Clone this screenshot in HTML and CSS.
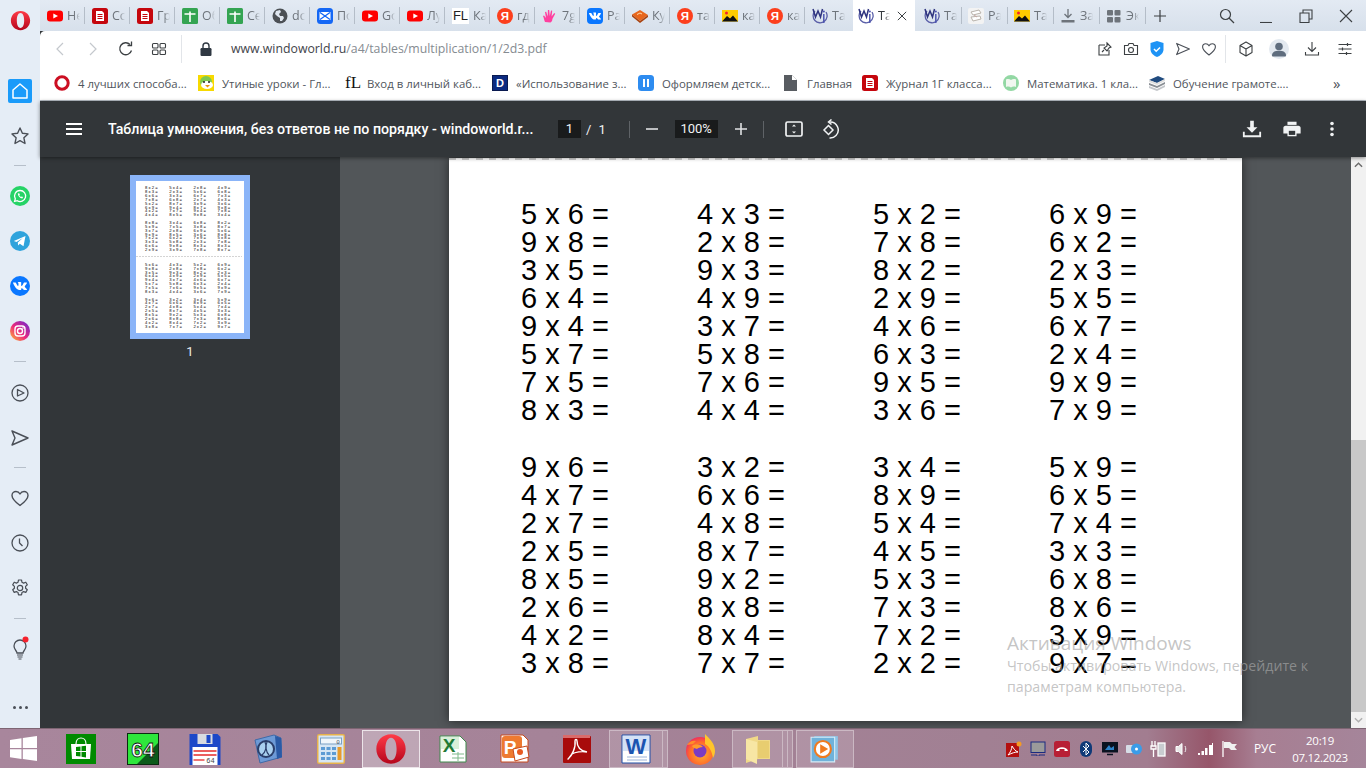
FILE: index.html
```html
<!DOCTYPE html>
<html lang="ru">
<head>
<meta charset="utf-8">
<title>Таблица умножения</title>
<link rel="stylesheet" href="styles.css">
</head>
<body>
<svg class="defs" xmlns="http://www.w3.org/2000/svg">
<defs>
<linearGradient id="opg" x1="0" y1="0" x2="0" y2="1"><stop offset="0" stop-color="#ff3b47"/><stop offset="1" stop-color="#b5051c"/></linearGradient>
<radialGradient id="ffg" cx=".55" cy=".6" r=".6"><stop offset="0" stop-color="#ffb52e"/><stop offset=".7" stop-color="#ff6a2c"/><stop offset="1" stop-color="#f0325b"/></radialGradient>
<linearGradient id="igg" x1="0" y1="1" x2="1" y2="0"><stop offset="0" stop-color="#fdc32e"/><stop offset=".45" stop-color="#ee2a7b"/><stop offset="1" stop-color="#6228d7"/></linearGradient>
<symbol id="yt" viewBox="0 0 16 16"><rect y="2.5" width="16" height="11" rx="3.2" fill="#f00"/><path d="M6.3 5.4 11 8l-4.7 2.6z" fill="#fff"/></symbol>
<symbol id="doc" viewBox="0 0 16 16"><rect width="16" height="16" rx="2.5" fill="#c5060d"/><path d="M4 3h6l2 2v8H4z" fill="#fff"/><path d="M5.5 6.5h5M5.5 8.5h5M5.5 10.5h5" stroke="#c5060d"/></symbol>
<symbol id="sheet" viewBox="0 0 16 16"><rect width="16" height="16" rx="1.5" fill="#34a452"/><path d="M2.5 6h11M8 3.500V14" stroke="#fff" stroke-width="1.600"/></symbol>
<symbol id="globe" viewBox="0 0 16 16"><circle cx="8" cy="8" r="7.5" fill="#4c5055"/><path d="M4 3l4-1 1 2-2 2 1 2 3 0 1 2-2 3-2 0 0-3-3-2-2-2z" fill="#dfe6ef"/></symbol>
<symbol id="mail" viewBox="0 0 16 16"><rect width="16" height="16" rx="3.5" fill="#1467f5"/><rect x="2.5" y="4" width="11" height="8" fill="#fff"/><path d="M3 4.5 8 8l5-3.5M3 11.5 8 8l5 3.5" fill="none" stroke="#1467f5" stroke-width="1.3"/></symbol>
<symbol id="ya" viewBox="0 0 16 16"><circle cx="8" cy="8" r="8" fill="#fc3f1d"/><text x="8" y="12" text-anchor="middle" font-family="Liberation Sans" font-weight="700" font-size="11.5" fill="#fff">Я</text></symbol>
<symbol id="hand" viewBox="0 0 16 16"><path d="M3 14c-1-2-1-4-2-6l1-.5 2 2.500-1-6 1.200-.3 1.500 4.800.2-6.500h1.300l.6 6 1.200-5.500 1.200.3-.6 5.700 2.600-3.500 1 .7-2.800 5.300c0 2-1 3-2 3.500z" fill="#ff3f9f"/></symbol>
<symbol id="vk" viewBox="0 0 16 16"><rect width="16" height="16" rx="4" fill="#0a77ff"/><g transform="translate(2 2) scale(.5)"><path fill="#fff" d="M13.162 18.994c.609 0 .858-.406.851-.915-.031-1.917.714-2.949 2.059-1.604 1.488 1.488 1.796 2.519 3.603 2.519h3.2c.808 0 1.126-.26 1.126-.668 0-.863-1.421-2.386-2.625-3.504-1.686-1.565-1.765-1.602-.313-3.486 1.801-2.339 4.157-5.336 2.073-5.336h-3.981c-.772 0-.828.435-1.103 1.083-.995 2.347-2.886 5.387-3.604 4.922-.751-.485-.407-2.406-.35-5.261.015-.754.011-1.271-1.141-1.539-.629-.145-1.241-.205-1.809-.205-2.273 0-3.841.953-2.95 1.119 1.571.293 1.42 3.692 1.054 5.16-.638 2.556-3.036-2.024-4.035-4.305-.241-.548-.315-.974-1.175-.974h-3.255c-.492 0-.787.16-.787.516 0 .602 2.96 6.72 5.786 9.77 2.756 2.975 5.48 2.708 7.376 2.708z"/></g></symbol>
<symbol id="book" viewBox="0 0 16 16"><path d="M0 6.500 8 2l8 5-8 6z" fill="#e8661c"/><path d="M0 6.500v2L8 15l8-6V7l-8 6z" fill="#a8420f"/><path d="M5 6.500l3-1.500 2 1" stroke="#ffd9a8" fill="none"/></symbol>
<symbol id="img" viewBox="0 0 16 16"><rect y="2" width="16" height="11.500" fill="#ffcc00"/><path d="M0 13.500 5 8l3 2.500L11 7.500l5 6z" fill="#111"/><circle cx="4.500" cy="5" r="1.500" fill="#f2232e"/></symbol>
<symbol id="wi" viewBox="0 0 16 16"><path d="M3 3a7 7 0 1 0 11 1" fill="none" stroke="#5a5fa8" stroke-width="1.300"/><path d="M1 1l2.500 8L6 3l2.500 6L10.500 1" fill="none" stroke="#2f347f" stroke-width="1.500"/><path d="M11.800 6v9" stroke="#4d55b0" stroke-width="1.500"/><circle cx="11.800" cy="3.500" r="1.100" fill="#4d55b0"/></symbol>
<symbol id="paper" viewBox="0 0 16 16"><rect width="16" height="16" rx="2" fill="#f3f3f3"/><path d="M3 4l8-2 2 3-8 2zM3 9l9-1 1 3-8 2z" fill="#fff" stroke="#b9b3ac"/><path d="M6 7l3 2" stroke="#c8a9a4"/></symbol>
<symbol id="dlt" viewBox="0 0 16 16"><path d="M8 1v8M4.500 6 8 9.500 11.500 6" fill="none" stroke="#6e747b" stroke-width="1.300"/><rect x="1.500" y="12" width="13" height="2.500" fill="#6e747b"/></symbol>
<symbol id="grid" viewBox="0 0 16 16"><g fill="#6e747b"><rect x="1" y="2" width="6" height="5.500" rx="1"/><rect x="8.500" y="2" width="6" height="5.500" rx="1"/><rect x="1" y="9" width="6" height="5.500" rx="1"/><rect x="8.500" y="9" width="6" height="5.500" rx="1"/></g></symbol>
<symbol id="send" viewBox="0 0 20 20"><path d="M2 3l16 7-16 7 3-7z" fill="none" stroke="#4a4f57" stroke-width="1.400" stroke-linejoin="round"/></symbol>
<symbol id="heart" viewBox="0 0 20 20"><path d="M10 17.500C4 13 2 10.500 2 7.500 2 5 4 3.500 6 3.500c1.700 0 3.200 1 4 2.500.8-1.500 2.300-2.500 4-2.500 2 0 4 1.500 4 4 0 3-2 5.500-8 10z" fill="none" stroke="#4a4f57" stroke-width="1.400" stroke-linejoin="round"/></symbol>
<symbol id="op" viewBox="0 0 24 24"><path fill="url(#opg)" fill-rule="evenodd" d="M12 1C5.500 1 1 6 1 12s4.500 11 11 11 11-5 11-11S18.500 1 12 1zm0 2.500c2.800 0 4.200 3.800 4.200 8.500s-1.400 8.500-4.200 8.500S7.800 16.700 7.800 12 9.200 3.500 12 3.500z"/></symbol>
</defs>
</svg>

<div class="window">
  <aside class="rail">
    <div class="rail-logo"><svg class="logo"><use href="#op"/></svg></div>
    <div class="rail-item"><span class="home"><svg viewBox="0 0 20 20" class="i20"><path d="M3 9l7-6 7 6v8H3z" fill="none" stroke="#fff" stroke-width="1.500" stroke-linejoin="round"/></svg></span></div>
    <div class="rail-item"><svg viewBox="0 0 20 20" class="i20"><path d="M10 2l2.400 5.200 5.600.7-4.100 3.900 1.100 5.700L10 14.700l-5 2.800 1.100-5.700L2 7.900l5.600-.7z" fill="none" stroke="#4a4f57" stroke-width="1.400" stroke-linejoin="round"/></svg></div>
    <div class="rail-sep rail-sep-a"></div>
    <div class="rail-item"><svg viewBox="0 0 20 20" class="i20"><circle cx="10" cy="10" r="10" fill="#25d366"/><path d="M10 4.500a5.500 5.500 0 0 0-4.700 8.300l-.7 2.600 2.700-.7A5.500 5.500 0 1 0 10 4.500z" fill="none" stroke="#fff" stroke-width="1.300"/><path d="M7.800 7.500c0 2.500 2 4.700 4.500 4.900l.8-1.300-1.500-.7-.6.600c-.8-.3-1.400-1-1.700-1.700l.6-.6-.7-1.500z" fill="#fff"/></svg></div>
    <div class="rail-item"><svg viewBox="0 0 20 20" class="i20"><circle cx="10" cy="10" r="10" fill="#2fa3dc"/><path d="M3.800 10 15.500 5l-2 10.300-3.700-2.600-1.700 1.700-.3-3 5-4.400-6.300 3.900z" fill="#fff"/></svg></div>
    <div class="rail-item"><svg viewBox="0 0 20 20" class="i20"><circle cx="10" cy="10" r="10" fill="#0a77ff"/><g transform="translate(3 3) scale(.583)"><path fill="#fff" d="M13.162 18.994c.609 0 .858-.406.851-.915-.031-1.917.714-2.949 2.059-1.604 1.488 1.488 1.796 2.519 3.603 2.519h3.2c.808 0 1.126-.26 1.126-.668 0-.863-1.421-2.386-2.625-3.504-1.686-1.565-1.765-1.602-.313-3.486 1.801-2.339 4.157-5.336 2.073-5.336h-3.981c-.772 0-.828.435-1.103 1.083-.995 2.347-2.886 5.387-3.604 4.922-.751-.485-.407-2.406-.35-5.261.015-.754.011-1.271-1.141-1.539-.629-.145-1.241-.205-1.809-.205-2.273 0-3.841.953-2.95 1.119 1.571.293 1.42 3.692 1.054 5.16-.638 2.556-3.036-2.024-4.035-4.305-.241-.548-.315-.974-1.175-.974h-3.255c-.492 0-.787.16-.787.516 0 .602 2.96 6.72 5.786 9.77 2.756 2.975 5.48 2.708 7.376 2.708z"/></g></svg></div>
    <div class="rail-item"><svg viewBox="0 0 20 20" class="i20"><circle cx="10" cy="10" r="10" fill="url(#igg)"/><rect x="5" y="5" width="10" height="10" rx="3" fill="none" stroke="#fff" stroke-width="1.400"/><circle cx="10" cy="10" r="2.500" fill="none" stroke="#fff" stroke-width="1.400"/><circle cx="13" cy="7" r=".8" fill="#fff"/></svg></div>
    <div class="rail-sep rail-sep-b"></div>
    <div class="rail-item"><svg viewBox="0 0 20 20" class="i20"><circle cx="10" cy="10" r="8" fill="none" stroke="#4a4f57" stroke-width="1.300"/><path d="M7.500 6.500 14 10l-6.500 3z" fill="none" stroke="#4a4f57" stroke-width="1.300" stroke-linejoin="round"/></svg></div>
    <div class="rail-item"><svg class="i20"><use href="#send"/></svg></div>
    <div class="rail-sep"></div>
    <div class="rail-item"><svg class="i20"><use href="#heart"/></svg></div>
    <div class="rail-item"><svg viewBox="0 0 20 20" class="i20"><circle cx="10" cy="10" r="8" fill="none" stroke="#4a4f57" stroke-width="1.300"/><path d="M9.500 5.500V10l3 3" fill="none" stroke="#4a4f57" stroke-width="1.300"/></svg></div>
    <div class="rail-item"><svg viewBox="0 0 20 20" class="i20"><path d="M8.500 2h3l.5 2.300 1.600.8 2.200-.9 1.500 2.600-1.700 1.600v1.800l1.700 1.600-1.500 2.600-2.200-.8-1.600.9-.5 2.300h-3l-.5-2.300-1.600-.9-2.200.8-1.500-2.600 1.700-1.600V8.400L2.700 6.800l1.500-2.600 2.200.9L8 4.300z" fill="none" stroke="#4a4f57" stroke-width="1.200" stroke-linejoin="round"/><circle cx="10" cy="10" r="2.700" fill="none" stroke="#4a4f57" stroke-width="1.200"/></svg></div>
    <div class="rail-sep rail-sep-b"></div>
    <div class="rail-item rail-bulb">
      <svg viewBox="0 0 20 24" class="bulb"><path d="M7 17c0-2-3-3.500-3-7a6 6 0 0 1 12 0c0 3.500-3 5-3 7z" fill="none" stroke="#4a4f57" stroke-width="1.300"/><path d="M7 19h6M7.500 21h5M8.500 23h3" stroke="#4a4f57" stroke-width="1.200"/><circle cx="15.500" cy="3.500" r="3" fill="#f5222d"/></svg>
    </div>
    <div class="rail-more"><i></i><i></i><i></i></div>
  </aside>

  <main class="main">
    <div class="tabstrip">
      <div class="tab"><svg class="i16"><use href="#yt"/></svg><span class="tl">Не</span></div>
      <div class="tab"><svg class="i16"><use href="#doc"/></svg><span class="tl">Сс</span></div>
      <div class="tab"><svg class="i16"><use href="#doc"/></svg><span class="tl">Гр</span></div>
      <div class="tab"><svg class="i16"><use href="#sheet"/></svg><span class="tl">Об</span></div>
      <div class="tab"><svg class="i16"><use href="#sheet"/></svg><span class="tl">Се</span></div>
      <div class="tab"><svg class="i16"><use href="#globe"/></svg><span class="tl">dc</span></div>
      <div class="tab"><svg class="i16"><use href="#mail"/></svg><span class="tl">По</span></div>
      <div class="tab"><svg class="i16"><use href="#yt"/></svg><span class="tl">Gо</span></div>
      <div class="tab"><svg class="i16"><use href="#yt"/></svg><span class="tl">Лу</span></div>
      <div class="tab"><span class="fl">FL</span><span class="tl">Ка</span></div>
      <div class="tab"><svg class="i16"><use href="#ya"/></svg><span class="tl">гд</span></div>
      <div class="tab"><svg class="i16"><use href="#hand"/></svg><span class="tl">7g</span></div>
      <div class="tab"><svg class="i16"><use href="#vk"/></svg><span class="tl">Ра</span></div>
      <div class="tab"><svg class="i16"><use href="#book"/></svg><span class="tl">Ку</span></div>
      <div class="tab"><svg class="i16"><use href="#ya"/></svg><span class="tl">та</span></div>
      <div class="tab"><svg class="i16"><use href="#img"/></svg><span class="tl">ка</span></div>
      <div class="tab"><svg class="i16"><use href="#ya"/></svg><span class="tl">ка</span></div>
      <div class="tab tab-pre"><svg class="i16"><use href="#wi"/></svg><span class="tl">Та</span></div>
      <div class="tab-active"><svg class="i16"><use href="#wi"/></svg><span class="tl tl-a">Та</span><svg viewBox="0 0 12 12" class="tab-x"><path d="M1 1l10 10M11 1 1 11" stroke="#3c4043" stroke-width="1.200"/></svg></div>
      <div class="tab tab-w"><svg class="i16"><use href="#wi"/></svg><span class="tl">Та</span></div>
      <div class="tab tab-n"><svg class="i16"><use href="#paper"/></svg><span class="tl">Ра</span></div>
      <div class="tab tab-n"><svg class="i16"><use href="#img"/></svg><span class="tl">Та</span></div>
      <div class="tab tab-n"><svg class="i16"><use href="#dlt"/></svg><span class="tl">За</span></div>
      <div class="tab tab-n"><svg class="i16"><use href="#grid"/></svg><span class="tl">Эк</span></div>
      <div class="tab-plus"><svg viewBox="0 0 14 14" class="i14"><path d="M7 1v12M1 7h12" stroke="#3c4043" stroke-width="1.200"/></svg></div>
      <div class="winbtns">
        <div class="winbtn winbtn-s"><svg viewBox="0 0 16 16" class="i16"><circle cx="6.500" cy="6.500" r="5" fill="none" stroke="#3c4043" stroke-width="1.200"/><path d="M10 10l5 5" stroke="#3c4043" stroke-width="1.300"/></svg></div>
        <div class="winbtn"><svg viewBox="0 0 14 14" class="i14"><path d="M1 13.500h12" stroke="#3c4043" stroke-width="1.100"/></svg></div>
        <div class="winbtn"><svg viewBox="0 0 14 14" class="i14"><path d="M1 4h9v9.500H1zM4 4V1h9v9h-3" fill="none" stroke="#3c4043" stroke-width="1.100"/></svg></div>
        <div class="winbtn"><svg viewBox="0 0 14 14" class="i14"><path d="M1 1l12 12M13 1 1 13" stroke="#3c4043" stroke-width="1.100"/></svg></div>
      </div>
    </div>

    <div class="toolbar">
      <div class="nav"><svg viewBox="0 0 16 16" class="i16"><path d="M11 2 5 8l6 6" fill="none" stroke="#c4c8cd" stroke-width="1.200"/></svg></div>
      <div class="nav"><svg viewBox="0 0 16 16" class="i16"><path d="M5 2l6 6-6 6" fill="none" stroke="#c4c8cd" stroke-width="1.200"/></svg></div>
      <div class="nav"><svg viewBox="0 0 16 16" class="i16"><path d="M13.500 9.500A6 6 0 1 1 12 3.500" fill="none" stroke="#3c4043" stroke-width="1.300"/><path d="M9.500 4.500h4v-4" fill="none" stroke="#3c4043" stroke-width="1.300"/></svg></div>
      <div class="nav"><svg viewBox="0 0 16 16" class="i16"><g fill="none" stroke="#3c4043" stroke-width="1.100"><rect x="1.500" y="2.500" width="5.500" height="4.500" rx="1"/><rect x="9" y="2.500" width="5.500" height="4.500" rx="1"/><rect x="1.500" y="9" width="5.500" height="4.500" rx="1"/><rect x="9" y="9" width="5.500" height="4.500" rx="1"/></g></svg></div>
      <div class="vsep"></div>
      <svg viewBox="0 0 16 16" class="i16 lock"><rect x="2.500" y="7" width="11" height="8" rx="1.200" fill="#2f3842"/><path d="M5 7V5a3 3 0 0 1 6 0v2" fill="none" stroke="#2f3842" stroke-width="1.400"/></svg>
      <div class="url"><b>www.windoworld.ru</b>/a4/tables/multiplication/1/2d3.pdf</div>
      <div class="tools">
        <div class="tool"><svg viewBox="0 0 16 16" class="i16"><path d="M2 4h6M2 4v10h10V9" fill="none" stroke="#3c4043" stroke-width="1.100"/><path d="M10 2l4 4-2 1-2 3-3-3 3-2zM7 9l-2 2" fill="none" stroke="#3c4043" stroke-width="1.100"/></svg></div>
        <div class="tool"><svg viewBox="0 0 16 16" class="i16"><path d="M1.500 4.500h3.500l1-2h4l1 2h3.500v9h-13z" fill="none" stroke="#3c4043" stroke-width="1.100"/><circle cx="8" cy="9" r="2.500" fill="none" stroke="#3c4043" stroke-width="1.100"/></svg></div>
        <div class="tool"><svg viewBox="0 0 16 16" class="i16"><path d="M8 0l6.500 2v6.500C14.500 12 11 15 8 16c-3-1-6.500-4-6.500-7.500V2z" fill="#1e93f5"/><path d="M5 8l2.200 2.200L11 6.500" fill="none" stroke="#fff" stroke-width="1.500"/></svg></div>
        <div class="tool"><svg class="i16"><use href="#send"/></svg></div>
        <div class="tool"><svg class="i16"><use href="#heart"/></svg></div>
      </div>
      <div class="vsep vsep-r"></div>
      <div class="nav"><svg viewBox="0 0 16 16" class="i16"><path d="M8 1l6 3.500v7L8 15l-6-3.500v-7zM2 4.500 8 8l6-3.500M8 8v7" fill="none" stroke="#3c4043" stroke-width="1.100" stroke-linejoin="round"/></svg></div>
      <div class="nav"><span class="avatar"><svg viewBox="0 0 20 20" class="i20"><circle cx="10" cy="7.500" r="3.800" fill="#5f6d7e"/><path d="M3 16.500C3 13 6 11.800 10 11.800s7 1.200 7 4.700c0 .8-.5 1-1 1H4c-.5 0-1-.2-1-1z" fill="#5f6d7e"/></svg></span></div>
      <div class="nav"><svg viewBox="0 0 16 16" class="i16"><path d="M8 1v9M4 6.500 8 10.500l4-4M1.500 11v3h13v-3" fill="none" stroke="#3c4043" stroke-width="1.100"/></svg></div>
      <div class="nav"><svg viewBox="0 0 16 16" class="i16"><path d="M1.500 3.500h13M1.500 8h13M1.500 12.500h13" stroke="#3c4043" stroke-width="1.100"/><path d="M10.500 2v3M5.500 6.500v3M9.500 11v3" stroke="#3c4043" stroke-width="1.200"/></svg></div>
    </div>

    <div class="bookmarks">
      <div class="bm bm-f"><svg viewBox="0 0 16 16" class="i16"><circle cx="8" cy="8" r="6.200" fill="none" stroke="#cc0f22" stroke-width="3"/></svg><span>4 лучших способа...</span></div>
      <div class="bm bm-w"><svg viewBox="0 0 16 16" class="i16"><rect width="16" height="16" fill="#f7d900"/><circle cx="8" cy="7" r="6" fill="#7ec850"/><ellipse cx="9" cy="10" rx="6" ry="4" fill="#fff"/><circle cx="6" cy="7" r="1" fill="#222"/><circle cx="11" cy="7" r="1" fill="#222"/><path d="M7 10h5l-2.500 2.500z" fill="#e69512"/></svg><span>Утиные уроки - Гл...</span></div>
      <div class="bm bm-w"><span class="fls">fL</span><span>Вход в личный каб...</span></div>
      <div class="bm"><span class="dbox">D</span><span>«Использование з...</span></div>
      <div class="bm"><svg viewBox="0 0 16 16" class="i16"><rect width="16" height="16" rx="3.500" fill="#2e8cf0"/><path d="M5 4h2v8H5zM9 4h2v8H9z" fill="#fff"/></svg><span>Оформляем детск...</span></div>
      <div class="bm bm-s"><svg viewBox="0 0 13 16" class="bm-page"><path d="M0 0h8l5 5v11H0z" fill="#585c61"/><path d="M8 0v5h5" fill="#fff"/></svg><span>Главная</span></div>
      <div class="bm bm-n"><svg class="i16"><use href="#doc"/></svg><span>Журнал 1Г класса...</span></div>
      <div class="bm"><svg viewBox="0 0 16 16" class="i16"><circle cx="8" cy="8" r="8" fill="#93d8a4"/><path d="M3 4.500c2-.8 3.500-.5 5 .5 1.500-1 3-1.300 5-.5V12c-2-.7-3.500-.5-5 .5-1.500-1-3-1.200-5-.5z" fill="#f1f7f0"/></svg><span>Математика. 1 кла...</span></div>
      <div class="bm bm-l"><svg viewBox="0 0 16 16" class="i16"><path d="M0 5 9 1l7 3-8 4z" fill="#204b7f"/><path d="M0 5v2l8 3 8-4V4L8 8z" fill="#dedede"/><path d="M0 8v2l8 3 8-4V7l-8 4z" fill="#8a8f95"/><path d="M0 11v2l8 3 8-4v-2l-8 4z" fill="#c3c6ca"/></svg><span>Обучение грамоте....</span></div>
      <div class="bm-more">»</div>
    </div>

    <section class="viewer">
      <header class="pdfbar">
        <div class="pdf-menu"><svg viewBox="0 0 16 12" class="burger"><path d="M0 1h16M0 6h16M0 11h16" stroke="#fff" stroke-width="1.800"/></svg></div>
        <div class="pdf-title">Таблица умножения, без ответов не по порядку - windoworld.r...</div>
        <div class="pdf-input pdf-page">1</div>
        <span class="pdf-slash">/</span>
        <span class="pdf-total">1</span>
        <div class="pdf-sep pdf-sep-a"></div>
        <svg viewBox="0 0 14 14" class="i14 pdf-minus"><path d="M1 7h12" stroke="#dfe1e3" stroke-width="1.600"/></svg>
        <div class="pdf-input pdf-zoom">100%</div>
        <svg viewBox="0 0 14 14" class="i14 pdf-plus"><path d="M1 7h12M7 1v12" stroke="#dfe1e3" stroke-width="1.600"/></svg>
        <div class="pdf-sep pdf-sep-b"></div>
        <svg viewBox="0 0 20 20" class="i20 pdf-fit"><rect x="2" y="3" width="16" height="14" rx="1.500" fill="none" stroke="#f1f3f4" stroke-width="1.700"/><path d="M10 5.500l-2 2h4zM10 14.500l-2-2h4z" fill="#f1f3f4"/></svg>
        <svg viewBox="0 0 20 20" class="i20 pdf-rot"><path d="M8.500 6.500 4 11l4.500 4.500L13 11z" fill="none" stroke="#f1f3f4" stroke-width="1.500"/><path d="M9 3h1a8 8 0 0 1 6 13.500A8 8 0 0 1 9.500 19" fill="none" stroke="#f1f3f4" stroke-width="1.500"/><path d="M11.500.5 8.500 3l3 2.500" fill="none" stroke="#f1f3f4" stroke-width="1.500"/></svg>
        <div class="pdf-right">
          <div class="pdf-btn"><svg viewBox="0 0 22 22" class="i20"><path d="M9 2h4v7h4l-6 6-6-6h4z" fill="#f1f3f4"/><path d="M2 14v5h18v-5" fill="none" stroke="#f1f3f4" stroke-width="2"/></svg></div>
          <div class="pdf-btn"><svg viewBox="0 0 22 22" class="i20"><path d="M6 3h10v3.500H6z" fill="#f1f3f4"/><path d="M4 7.500h14c1.500 0 2.500 1 2.500 2.500v6H16v3H6v-3H1.500v-6c0-1.500 1-2.500 2.500-2.500z" fill="#f1f3f4"/><rect x="7.500" y="13" width="7" height="4.500" fill="#323639"/></svg></div>
          <div class="pdf-btn"><svg viewBox="0 0 20 20" class="i20"><circle cx="10" cy="4.500" r="1.800" fill="#f1f3f4"/><circle cx="10" cy="10" r="1.800" fill="#f1f3f4"/><circle cx="10" cy="15.500" r="1.800" fill="#f1f3f4"/></svg></div>
        </div>
      </header>
      <div class="pdf-body">
        <aside class="thumbs">
          <div class="thumb">
            <div class="mini">
              <div class="mini-group">
<div class="mini-col">8 x 2 =
8 x 3 =
6 x 6 =
7 x 8 =
5 x 2 =
6 x 9 =
4 x 2 =
4 x 4 =</div>
<div class="mini-col">5 x 4 =
2 x 3 =
3 x 3 =
6 x 8 =
8 x 7 =
9 x 4 =
7 x 7 =
8 x 5 =</div>
<div class="mini-col">2 x 8 =
5 x 6 =
6 x 7 =
2 x 7 =
3 x 9 =
8 x 7 =
9 x 4 =
9 x 8 =</div>
<div class="mini-col">4 x 9 =
6 x 8 =
7 x 3 =
4 x 3 =
3 x 6 =
9 x 8 =
7 x 8 =
3 x 4 =</div>
              </div>
              <div class="mini-group">
<div class="mini-col">8 x 8 =
5 x 9 =
3 x 7 =
9 x 9 =
7 x 2 =
3 x 3 =
6 x 6 =
2 x 9 =</div>
<div class="mini-col">3 x 4 =
7 x 5 =
2 x 8 =
8 x 5 =
6 x 2 =
5 x 8 =
9 x 8 =
3 x 9 =</div>
<div class="mini-col">6 x 8 =
3 x 8 =
6 x 9 =
3 x 6 =
7 x 9 =
2 x 3 =
8 x 3 =
7 x 8 =</div>
<div class="mini-col">8 x 2 =
8 x 7 =
5 x 6 =
8 x 8 =
5 x 8 =
7 x 8 =
8 x 3 =
8 x 7 =</div>
              </div>
              <div class="mini-rule"></div>
              <div class="mini-group">
<div class="mini-col">5 x 6 =
9 x 8 =
3 x 5 =
6 x 4 =
9 x 4 =
5 x 7 =
7 x 5 =
8 x 3 =</div>
<div class="mini-col">4 x 3 =
2 x 8 =
9 x 3 =
4 x 9 =
3 x 7 =
5 x 8 =
7 x 6 =
4 x 4 =</div>
<div class="mini-col">5 x 2 =
7 x 8 =
8 x 2 =
2 x 9 =
4 x 6 =
6 x 3 =
9 x 5 =
3 x 6 =</div>
<div class="mini-col">6 x 9 =
6 x 2 =
2 x 3 =
5 x 5 =
6 x 7 =
2 x 4 =
9 x 9 =
7 x 9 =</div>
              </div>
              <div class="mini-group">
<div class="mini-col">9 x 6 =
4 x 7 =
2 x 7 =
2 x 5 =
8 x 5 =
2 x 6 =
4 x 2 =
3 x 8 =</div>
<div class="mini-col">3 x 2 =
6 x 6 =
4 x 8 =
8 x 7 =
9 x 2 =
8 x 8 =
8 x 4 =
7 x 7 =</div>
<div class="mini-col">3 x 4 =
8 x 9 =
5 x 4 =
4 x 5 =
5 x 3 =
7 x 3 =
7 x 2 =
2 x 2 =</div>
<div class="mini-col">5 x 9 =
6 x 5 =
7 x 4 =
3 x 3 =
6 x 8 =
8 x 6 =
3 x 9 =
9 x 7 =</div>
              </div>
            </div>
          </div>
          <div class="thumb-num">1</div>
        </aside>
        <div class="stage">
          <article class="page">
            <div class="page-rule"></div>
            <div class="eq-group">
<div class="eq-col">5 x 6 =
9 x 8 =
3 x 5 =
6 x 4 =
9 x 4 =
5 x 7 =
7 x 5 =
8 x 3 =</div>
<div class="eq-col">4 x 3 =
2 x 8 =
9 x 3 =
4 x 9 =
3 x 7 =
5 x 8 =
7 x 6 =
4 x 4 =</div>
<div class="eq-col">5 x 2 =
7 x 8 =
8 x 2 =
2 x 9 =
4 x 6 =
6 x 3 =
9 x 5 =
3 x 6 =</div>
<div class="eq-col">6 x 9 =
6 x 2 =
2 x 3 =
5 x 5 =
6 x 7 =
2 x 4 =
9 x 9 =
7 x 9 =</div>
            </div>
            <div class="eq-group">
<div class="eq-col">9 x 6 =
4 x 7 =
2 x 7 =
2 x 5 =
8 x 5 =
2 x 6 =
4 x 2 =
3 x 8 =</div>
<div class="eq-col">3 x 2 =
6 x 6 =
4 x 8 =
8 x 7 =
9 x 2 =
8 x 8 =
8 x 4 =
7 x 7 =</div>
<div class="eq-col">3 x 4 =
8 x 9 =
5 x 4 =
4 x 5 =
5 x 3 =
7 x 3 =
7 x 2 =
2 x 2 =</div>
<div class="eq-col">5 x 9 =
6 x 5 =
7 x 4 =
3 x 3 =
6 x 8 =
8 x 6 =
3 x 9 =
9 x 7 =</div>
            </div>
          </article>
        </div>
        <div class="scroll">
          <div class="sc-arrow"><svg viewBox="0 0 10 6" class="sc-i"><path d="M1 5l4-4 4 4" fill="none" stroke="#6b6b6b" stroke-width="1.600"/></svg></div>
          <div class="sc-track"><div class="sc-thumb"></div></div>
          <div class="sc-arrow"><svg viewBox="0 0 10 6" class="sc-i"><path d="M1 1l4 4 4-4" fill="none" stroke="#b0b0b0" stroke-width="1.600"/></svg></div>
        </div>
      </div>
    </section>
  </main>
</div>

<footer class="taskbar">
  <div class="start"><svg viewBox="0 0 27 25" class="winlogo"><path d="M0 4l11.500-1.700V12H0zM12.800 2.100 27 0v12H12.800zM0 13.200h11.500V23L0 21.300zM12.800 13.200H27V25l-14.200-2z" fill="#fff"/></svg></div>
  <div class="tb"><svg viewBox="0 0 30 30" class="i30"><rect width="30" height="30" fill="#008a00"/><path d="M5 10h20l-1 15H6z" fill="#fff"/><path d="M10 10c0-8 10-8 10 0" fill="none" stroke="#fff" stroke-width="1.200"/><path d="M10 13l4.500-.6v4.600H10zM15.500 12.300l4.500-.6V17h-4.500zM10 18h4.500v4.600L10 22zM15.500 18H20v5.400l-4.500-.6z" fill="#008a00"/></svg></div>
  <div class="tb"><svg viewBox="0 0 32 32" class="i32"><rect x=".5" y=".5" width="31" height="31" fill="#2ee63c" stroke="#0b2a10"/><path d="M31 10v21H10z" fill="#0c5a1a"/><text x="16" y="24" text-anchor="middle" font-family="Liberation Sans" font-weight="700" font-size="21" fill="#fff" stroke="#111" stroke-width=".8">64</text></svg></div>
  <div class="tb"><svg viewBox="0 0 31 32" class="i32"><path d="M0 1h28l3 3v28H0z" fill="#1c48c8"/><rect x="8" y="1" width="15" height="10" fill="#d8dbe0"/><rect x="17" y="2" width="4" height="8" fill="#1c48c8"/><rect x="3" y="14" width="25" height="18" fill="#fff"/><path d="M4 18h23M4 22h23" stroke="#e52b2b" stroke-width="1.300"/><path d="M4 27h11" stroke="#e52b2b" stroke-width="1.300"/><text x="21" y="30" text-anchor="middle" font-family="Liberation Mono" font-size="7" fill="#444">64</text></svg></div>
  <div class="tb"><svg viewBox="0 0 30 30" class="i30"><path d="M3 6 22 1l7 3 1 19-22 6z" fill="#6d9ad6" stroke="#3f6aa8"/><path d="M23 2l6 2 1 19-5 2z" fill="#2a5aa6"/><circle cx="14" cy="15" r="9" fill="#2a3e6a"/><circle cx="14" cy="15" r="7" fill="#a9d0ef"/><path d="M10 21c4-3 5-9 3-13M17 21c-3-3-4-9-2-13" fill="none" stroke="#2a3e6a" stroke-width="1.200"/></svg></div>
  <div class="tb tb-calc"><svg viewBox="0 0 28 30" class="i30"><rect width="28" height="30" rx="2" fill="#e8b24a"/><rect x="1.500" y="1.500" width="25" height="27" fill="#d6e6f4"/><rect x="3.500" y="4" width="21" height="6" fill="#f0f6fb" stroke="#7aa0c4"/><text x="21" y="9.500" text-anchor="middle" font-family="Liberation Mono" font-size="6" fill="#456">0</text><g fill="#5d9bd4"><rect x="4" y="13" width="4" height="3"/><rect x="9.500" y="13" width="4" height="3"/><rect x="15" y="13" width="4" height="3"/><rect x="4" y="18" width="4" height="3"/><rect x="9.500" y="18" width="4" height="3"/><rect x="15" y="18" width="4" height="3"/><rect x="4" y="23" width="4" height="3"/><rect x="9.500" y="23" width="4" height="3"/><rect x="15" y="23" width="4" height="3"/></g><rect x="20.500" y="13" width="4" height="13" fill="#e89b2c"/></svg></div>
  <div class="run run-opera"><svg class="i32"><use href="#op"/></svg></div>
  <div class="tb tb-x"><svg viewBox="0 0 30 30" class="i30"><path d="M2 2h20l6 6v20H2z" fill="#fff" stroke="#3f8a4c"/><path d="M3 3h18v12H3z" fill="#d9efd9"/><text x="11" y="18" text-anchor="middle" font-family="Liberation Sans" font-weight="700" font-size="19" fill="#1f7a36">X</text><path d="M14 20h12M14 24h12M20 18v9" stroke="#7fb98a"/></svg></div>
  <div class="tb"><svg viewBox="0 0 30 30" class="i30"><path d="M1 1h22l5 5v22H1z" fill="#fff" stroke="#c8481c"/><rect x="2" y="2" width="20" height="22" rx="3" fill="#ee7a30"/><text x="10" y="20" text-anchor="middle" font-family="Liberation Sans" font-weight="700" font-size="19" fill="#fff">P</text><path d="M13 15l14-3 2 11-14 4z" fill="#fff" stroke="#c8481c"/><circle cx="20" cy="18" r="3" fill="#e85a20"/></svg></div>
  <div class="tb"><svg viewBox="0 0 30 30" class="i30"><rect x="1" y="2" width="28" height="27" rx="1" fill="#a80b0b"/><rect x="1" y="1" width="27" height="3" fill="#d96b6b"/><path d="M6 25c4-3 8-12 7-18 0-2 2-2 2 0 0 6 4 10 10 11-5-1-12 0-15 2-2 2-4 6-4 5z" fill="none" stroke="#fff" stroke-width="1.400"/></svg></div>
  <div class="run run-word"><svg viewBox="0 0 30 30" class="i30"><path d="M1 1h28v28H1z" fill="#fff" stroke="#1f4fa8"/><path d="M2 2h26v15H2z" fill="#d4e2f6"/><text x="15" y="20" text-anchor="middle" font-family="Liberation Sans" font-weight="700" font-size="22" fill="#1c54b0">W</text><path d="M6 23h20M6 26h20" stroke="#9db4d8"/></svg></div>
  <div class="run-stack"></div>
  <div class="tb tb-ff"><svg viewBox="0 0 32 32" class="i32"><circle cx="16" cy="18" r="14" fill="url(#ffg)"/><path d="M21 1c5 5 10 10 10 17 0 3-1 5-2 7-1-6-3-11-8-14z" fill="#ffc52c"/><path d="M3 12c2-3 5-5 9-4l-3 3z" fill="#ff8f2a"/><circle cx="16" cy="18" r="6.500" fill="#7b3cc4"/><path d="M8 13c3-2 8-2 11 1-3 0-5 1-6 2-2-1-4-1-5-3z" fill="#ff9b2d"/></svg></div>
  <div class="run run-folder"><svg viewBox="0 0 32 32" class="i32"><path d="M4 6l12-3v4h12v19H16L4 30z" fill="#f0d988"/><path d="M4 6l11 3v22L4 26z" fill="#f7e6a4"/><path d="M16 8h11v17H16z" fill="#e8cd70"/></svg></div>
  <div class="run-stack"></div>
  <div class="run-stack run-stack-b"></div>
  <div class="run run-wmp"><svg viewBox="0 0 28 28" class="i30"><path d="M4 2h22v22H4z" fill="#8ec6e8"/><path d="M1 3h22v23H1z" fill="#6fb2da" stroke="#d5ecf8"/><circle cx="12" cy="14" r="8.500" fill="#f07b1f"/><circle cx="12" cy="14" r="6.500" fill="#fff"/><path d="M9.500 9.500l7.500 4.500-7.500 4.500z" fill="#f07b1f"/></svg></div>
  <div class="tray">
    <div class="tr"><svg viewBox="0 0 16 16" class="i16"><rect y="2" width="13" height="14" fill="#b40f0f"/><path d="M2 14c2-2 4-6 4-9 2 3 3 5 6 6-3 0-6 1-10 3z" fill="none" stroke="#fff"/><circle cx="13" cy="3" r="2.500" fill="#f59a23"/></svg></div>
    <div class="tr"><svg viewBox="0 0 16 16" class="i16"><rect x="1" y="1" width="14" height="10.500" fill="#9a9a9a" stroke="#1a2a80"/><path d="M1 14h6v1M9 15v-1h6" fill="none" stroke="#1a2a80"/></svg></div>
    <div class="tr"><svg viewBox="0 0 16 16" class="i16"><rect width="16" height="16" rx="2.500" fill="#b81f35"/><path d="M2 10c1-5 11-5 12 0h-3.500V8h-5v2z" fill="#fff"/></svg></div>
    <div class="tr"><svg viewBox="0 0 14 16" class="i16"><rect x="1" width="12" height="16" rx="6" fill="#0f3a78"/><path d="M4 5l6 6-3 3V2l3 3-6 6" fill="none" stroke="#fff"/></svg></div>
    <div class="tr"><svg viewBox="0 0 16 16" class="i16"><rect y="1" width="16" height="10.500" fill="#0a1220"/><path d="M3 9l4-5 2 3 3-2v4z" fill="#2d82c8"/><path d="M5 13.500h6" stroke="#0a1220" stroke-width="1.500"/></svg></div>
    <div class="tr"><svg viewBox="0 0 16 16" class="i16"><rect y="4" width="11" height="8" rx="1" fill="#d6dde6"/><circle cx="10.500" cy="8" r="5.500" fill="#3a9ce8"/><circle cx="10.500" cy="8" r="1.500" fill="#fff"/></svg></div>
    <div class="tr"><svg viewBox="0 0 16 16" class="i16"><path d="M2 0v5M5 0v5M1 5h5v3H1zM3.500 8v8" stroke="#fff" fill="none" stroke-width="1.300"/><rect x="8" y="2" width="7" height="13" fill="#c8ccd0" stroke="#fff" stroke-width="1.300"/></svg></div>
    <div class="tr"><svg viewBox="0 0 14 16" class="i16"><path d="M1 5.500h2.500L7 2.500v11l-3.500-3H1z" fill="#e8e8e8" stroke="#fff"/><path d="M10 5c1 2 1 4 0 6" fill="none" stroke="#eee"/></svg></div>
    <div class="tr"><svg viewBox="0 0 16 16" class="i16"><path d="M0 14h2v-2H0zM3.500 14h2.500v-4H3.500zM7 14h2.500V7H7zM11 14h4V2h-1v12h-3z" fill="#fff"/><path d="M11 14h4V4h-4z" fill="#fff"/></svg></div>
    <div class="tr"><svg viewBox="0 0 16 16" class="i16"><path d="M1 0v16" stroke="#fff" stroke-width="1.300"/><path d="M2 1h6l2 2h5l-2.500 3 2.500 3H9L7 7H2z" fill="#f0f0f0"/></svg></div>
  </div>
  <div class="lang">РУС</div>
  <div class="clock"><div>20:19</div><div>07.12.2023</div></div>
</footer>

<div class="activate">
  <div class="a-h">Активация Windows</div>
  <div class="a-t">Чтобы активировать Windows, перейдите к</div>
  <div class="a-t">параметрам компьютера.</div>
</div>
</body>
</html>
```
FILE: styles.css
```css
* { box-sizing: border-box; }
html, body { margin: 0; padding: 0; }
body { width: 1366px; height: 768px; overflow: hidden; font-family: "Open Sans", "Noto Sans", sans-serif; background: #323639; }
svg { display: block; flex: none; }
.defs { width: 0; height: 0; }
.i14 { width: 14px; height: 14px; }
.i16 { width: 16px; height: 16px; }
.i20 { width: 20px; height: 20px; }
.i30 { width: 30px; height: 30px; }
.i32 { width: 32px; height: 32px; }

.window { display: flex; height: 728px; }

/* left rail */
.rail { width: 40px; flex: none; display: flex; flex-direction: column; align-items: center; background: #e5edf6; }
.rail-logo { height: 68px; width: 100%; display: flex; justify-content: center; padding-top: 10px; }
.logo { width: 21px; height: 21px; }
.rail-item { height: 45px; width: 100%; display: flex; align-items: center; justify-content: center; }
.home { width: 24px; height: 24px; background: #1a9bfa; border-radius: 2px; display: flex; align-items: center; justify-content: center; }
.rail-sep { height: 15px; width: 100%; display: flex; align-items: center; justify-content: center; }
.rail-sep::before { content: ""; width: 12px; height: 1px; background: #b6bfca; }
.rail-sep-a { height: 15px; }
.rail-sep-b { height: 17px; }
.rail-bulb { height: 42px; }
.bulb { width: 20px; height: 24px; }
.rail-more { margin-top: auto; padding-bottom: 19px; display: flex; gap: 3px; }
.rail-more i { width: 3px; height: 3px; border-radius: 50%; background: #4a4f57; display: block; }

.main { flex: 1; min-width: 0; display: flex; flex-direction: column; }

/* tabs */
.tabstrip { height: 31px; display: flex; align-items: stretch; background: linear-gradient(#e3eaf3, #d7e0eb); }
.tab { width: 45px; flex: none; display: flex; align-items: center; gap: 4px; padding-left: 7px; overflow: hidden; background: linear-gradient(#b4bdc8, #b4bdc8) right center / 1px 17px no-repeat; }
.tab-pre { width: 48px; background: none; }
.tab-w { width: 47px; padding-left: 9px; }
.tab-n { width: 46px; padding-left: 6px; }
.tl { width: 13px; flex: none; overflow: hidden; white-space: nowrap; font-size: 12.5px; color: #6e747b; -webkit-mask-image: linear-gradient(to right, #000 55%, transparent); mask-image: linear-gradient(to right, #000 55%, transparent); }
.tl-a { color: #33383d; width: 12px; }
.fl { width: 17px; height: 16px; background: #fff; color: #222; font: 13px "Liberation Sans", sans-serif; line-height: 16px; text-align: center; flex: none; }
.tab-active { width: 62px; flex: none; display: flex; align-items: center; padding-left: 5px; gap: 4px; background: #fff; }
.tab-x { width: 10px; height: 10px; margin-left: 3px; }
.tab-plus { width: 28px; display: flex; align-items: center; justify-content: center; margin-left: 0; }
.winbtns { margin-left: auto; display: flex; }
.winbtn { width: 40px; display: flex; align-items: center; justify-content: center; }
.winbtn-s { width: 38px; }

/* toolbar */
.toolbar { height: 35px; background: #fff; display: flex; align-items: center; padding: 0 4.5px 0 3.5px; border-top-left-radius: 5px; margin-top: 0; }
.nav { width: 33px; height: 100%; display: flex; align-items: center; justify-content: center; }
.vsep { width: 1px; height: 28px; background: #e2e5e9; margin-left: 5.5px; }
.vsep-r { margin-left: 3px; margin-right: 4px; }
.lock { margin-left: 16px; }
.url { margin-left: 17px; font-size: 12.3px; color: #858b91; white-space: nowrap; }
.url b { font-weight: 400; color: #3f444a; }
.tools { margin-left: auto; display: flex; }
.tool { width: 26px; display: flex; justify-content: center; }
.avatar { width: 20px; height: 20px; border-radius: 50%; background: #e3e9f0; display: block; }

/* bookmarks */
.bookmarks { height: 35px; background: #fff; border-bottom: 1px solid #b9c0c8; display: flex; align-items: center; padding-left: 14px; }
.bm { width: 146px; flex: none; display: flex; align-items: center; gap: 8px; font-size: 11.4px; color: #50555c; white-space: nowrap; overflow: hidden; }
.bm-f { width: 144px; }
.bm-w { width: 147px; }
.bm-s { width: 78px; gap: 10px; }
.bm-n { width: 141px; }
.bm-l { width: 184px; }
.bm-page { width: 13px; height: 16px; }
.fls { width: 14px; font: 17px "Liberation Serif", serif; color: #111; flex: none; }
.dbox { width: 16px; height: 16px; background: #0b2a80; border: 1px solid #0a1a50; color: #fff; font: 700 11px/14px "Liberation Sans", sans-serif; text-align: center; flex: none; }
.bm-more { font-size: 15px; color: #4a4f57; }

/* pdf viewer */
.viewer { flex: 1; min-height: 0; display: flex; flex-direction: column; background: #525659; }
.pdfbar { height: 56px; flex: none; display: flex; align-items: center; background: #323639; padding-left: 14px; padding-right: 14px; color: #f1f3f4; position: relative; z-index: 2; box-shadow: 0 1px 4px rgba(0,0,0,.45); }
.pdf-menu { width: 40px; display: flex; justify-content: center; }
.burger { width: 16px; height: 12px; }
.pdf-title { width: 425px; margin-left: 14px; font: 500 14.2px "Roboto", sans-serif; white-space: nowrap; overflow: hidden; color: #fff; }
.pdf-input { background: #191b1c; height: 18px; font: 400 13px/18px "Roboto", sans-serif; text-align: center; color: #f1f3f4; }
.pdf-page { width: 23px; margin-left: 25px; }
.pdf-slash { margin-left: 5px; font: 13px "Roboto", sans-serif; }
.pdf-total { margin-left: 7px; font: 13px "Roboto", sans-serif; }
.pdf-sep { width: 1px; height: 17px; background: #5f6367; }
.pdf-sep-a { margin-left: 23px; }
.pdf-minus { margin-left: 15px; }
.pdf-zoom { width: 43px; margin-left: 16px; }
.pdf-plus { margin-left: 16px; }
.pdf-sep-b { margin-left: 15px; }
.pdf-fit { margin-left: 20px; }
.pdf-rot { margin-left: 16px; }
.pdf-right { margin-left: auto; display: flex; }
.pdf-btn { width: 40px; display: flex; justify-content: center; }

.pdf-body { flex: 1; min-height: 0; display: flex; }
.thumbs { width: 300px; flex: none; background: #323639; display: flex; flex-direction: column; align-items: center; padding-top: 18px; }
.thumb { width: 120px; height: 164px; border: 6px solid #8ab4f8; background: #fff; overflow: hidden; }
.mini { padding: 5px 0 0 9px; }
.mini-group { display: flex; margin-bottom: 3.6px; }
.mini-col { width: 24.2px; flex: none; white-space: pre; font: 4.2px/3.9px "Liberation Sans", sans-serif; color: #000; }
.mini-rule { height: 1px; margin: 3px 0 6px -9px; width: 106px; background: repeating-linear-gradient(to right, #d4d4d4 0 2px, #fff 2px 3px); }
.thumb-num { margin-top: 5px; font: 13px "Roboto", sans-serif; color: #e8eaed; }

.stage { flex: 1; min-width: 0; padding-left: 109px; background: #525659; overflow: hidden; }
.page { width: 793px; height: 563px; background: #fff; padding-left: 72px; box-shadow: 0 0 10px rgba(0,0,0,.55); }
.page-rule { height: 2px; margin: 1px 13px 40px -72px; background: repeating-linear-gradient(to right, #cdcdcd 0 7px, #fff 7px 13.3px); }
.eq-group { display: flex; margin-bottom: 29px; }
.eq-col { width: 176px; flex: none; white-space: pre; font: 29px/28px "Liberation Sans", Arial, sans-serif; color: #000; }

.scroll { width: 15px; flex: none; background: #f1f1f1; display: flex; flex-direction: column; }
.sc-arrow { height: 16px; flex: none; display: flex; align-items: center; justify-content: center; }
.sc-i { width: 9px; height: 6px; }
.sc-track { flex: 1; display: flex; flex-direction: column; justify-content: flex-end; }
.sc-thumb { height: 272px; background: #c8c8c8; }

/* taskbar */
.taskbar { height: 40px; display: flex; align-items: center; background: linear-gradient(to right, #a8869c 0, #a58398 40%, #a18093 72%, #a27d90 84%, #96566a 88.500%, #a77e92 92%, #a5859a 100%); border-top: 1px solid #7e6573; color: #fff; }
.start { width: 50px; flex: none; display: flex; justify-content: flex-end; padding-right: 13px; }
.winlogo { width: 27px; height: 25px; }
.tb { width: 62px; flex: none; display: flex; justify-content: center; }
.tb-calc { padding-left: 4px; }
.tb-x { margin-left: 2px; }
.tb-ff { width: 64px; }
.run { height: 38px; flex: none; display: flex; align-items: center; justify-content: center; background: rgba(255,255,255,.14); border: 1px solid rgba(255,255,255,.35); }
.run-opera { width: 58px; margin-left: 2px; background: rgba(255,255,255,.28); border-color: rgba(255,255,255,.7); }
.run-word { width: 54px; margin-left: 1px; }
.run-folder { width: 51px; }
.run-wmp { width: 58px; margin-left: 3px; }
.run-stack { width: 5px; height: 38px; flex: none; background: rgba(255,255,255,.14); border: 1px solid rgba(255,255,255,.35); border-left: 0; }
.tray { margin-left: auto; display: flex; }
.tr { width: 24px; display: flex; justify-content: center; }
.lang { width: 46px; text-align: center; font-size: 12px; }
.clock { width: 64px; margin-right: 14px; text-align: center; font-size: 11.5px; line-height: 17px; letter-spacing: -.3px; }

/* activation watermark */
.activate { position: absolute; left: 1007px; top: 631px; color: rgba(167,167,167,.665); white-space: nowrap; pointer-events: none; }
.a-h { font-size: 19px; line-height: 24px; }
.a-t { font-size: 14.2px; line-height: 21px; }
```
